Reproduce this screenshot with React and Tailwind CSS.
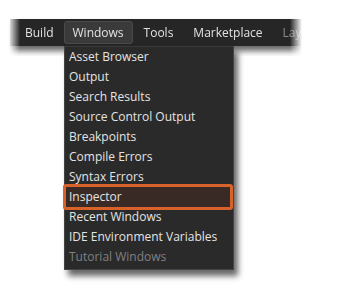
import React from "react";

const items = [
  "Asset Browser",
  "Output",
  "Search Results",
  "Source Control Output",
  "Breakpoints",
  "Compile Errors",
  "Syntax Errors",
  "Inspector",
  "Recent Windows",
  "IDE Environment Variables",
  "Tutorial Windows",
];

export default function App() {
  return (
    <div
      className="relative w-[338px] h-[291px] bg-white overflow-hidden"
      style={{ fontFamily: '"Open Sans", "Noto Sans", sans-serif' }}
    >
      <div className="pt-[12px] pb-[10px] pl-[10px] w-[330px] [mask-image:linear-gradient(to_right,transparent_8px,black_20px,black_290px,transparent_302px)]">
        <div className="h-[27px] bg-[#262626] flex items-center text-[12px] text-[#e2e2e2] shadow-[0_5px_6px_rgba(0,0,0,0.6)] mt-[7px]">
          <span className="ml-[15px]">Build</span>
          <span className="ml-[10px] h-[23px] px-[8px] flex items-center rounded-[3px] bg-[#3a3a3a] border border-[#4a4a4a]">
            Windows
          </span>
          <span className="ml-[11px]">Tools</span>
          <span className="ml-[20px]">Marketplace</span>
          <span className="ml-[20px] text-[#8a8a8a]">Layout</span>
        </div>
      </div>
      <div className="absolute left-[64px] top-[46px] w-[170px] h-[224px] bg-[#2a2a2a] border border-[#444] border-t-[#3a3a3a] shadow-[4px_6px_6px_rgba(0,0,0,0.6)]">
        {items.map((t, i) => (
          <div
            key={t}
            className={
              "h-[20px] flex items-center text-[12px] " +
              (i === 10 ? "text-[#808080]" : "text-[#e4e4e4]")
            }
          >
            {t === "Inspector" ? (
              <div className="-ml-[2px] w-[172px] h-[26px] -my-[3px] rounded-[3px] border-[3px] border-[#d9622b] bg-[#3a2a26] flex items-center pl-[3px] relative z-10">
                {t}
              </div>
            ) : (
              <span className="pl-[4px]">{t}</span>
            )}
          </div>
        ))}
      </div>
    </div>
  );
}
